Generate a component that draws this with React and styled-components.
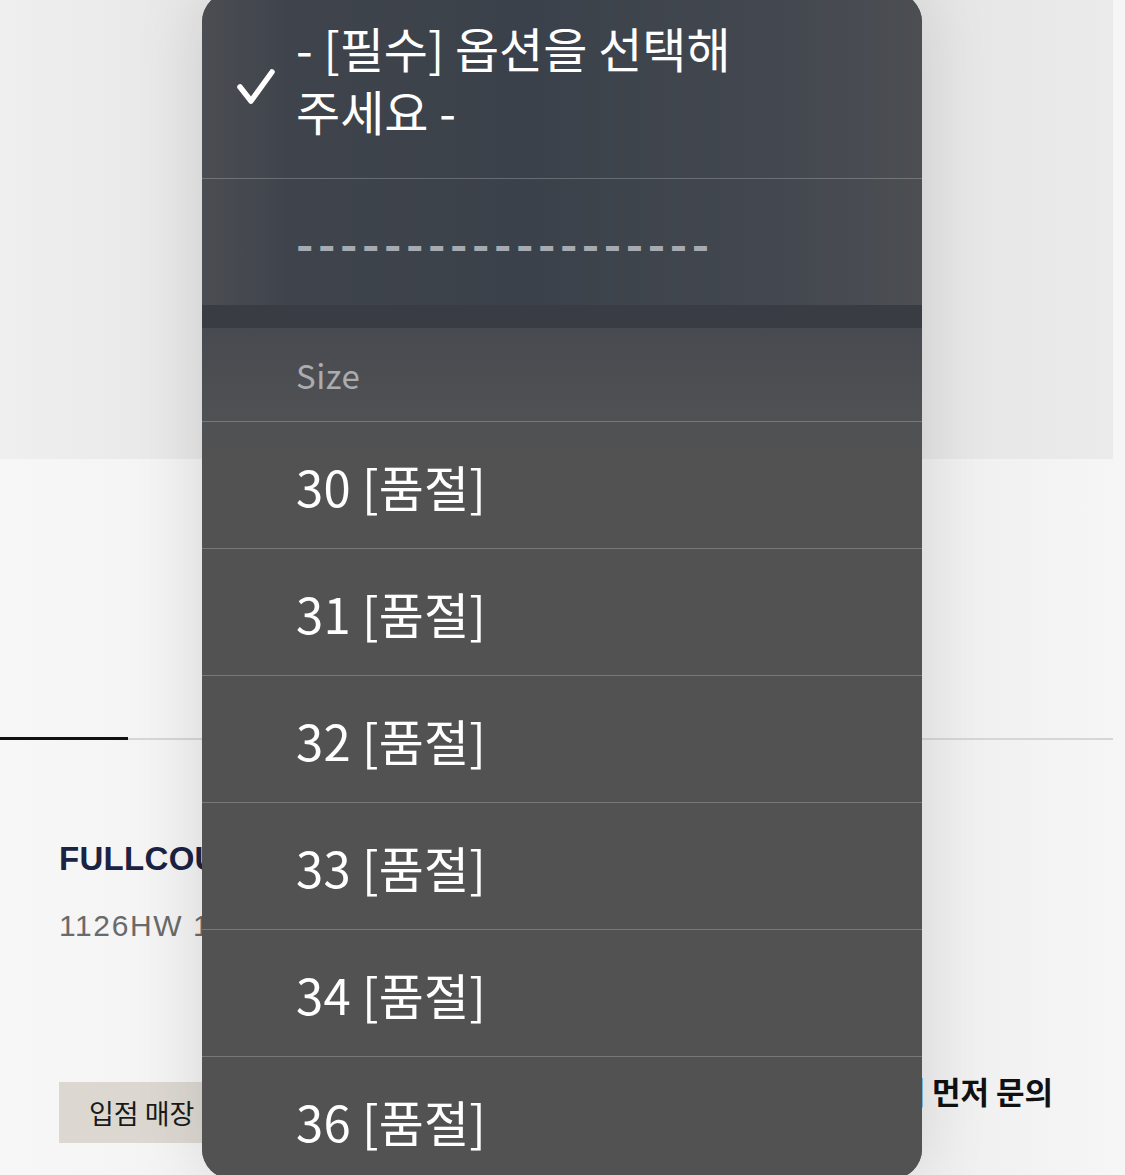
import React from 'react';
import styled, { createGlobalStyle } from 'styled-components';

const GlobalStyle = createGlobalStyle`
  html, body {
    margin: 0;
    padding: 0;
    background: #f3f3f3;
  }
  body {
    font-family: "Noto Sans", "Noto Sans CJK KR", sans-serif;
  }
`;

const Page = styled.div`
  position: relative;
  width: 1125px;
  height: 1175px;
  overflow: hidden;
  background: linear-gradient(to right, #f7f7f7 0%, #efefef 40%, #f0f0f0 85%, #f6f6f6 100%);
`;

const Hero = styled.div`
  width: 1113px;
  height: 459px;
  background: linear-gradient(to right, #efefef 0%, #e1e1e1 35%, #e3e3e3 75%, #ebebeb 100%);
`;

const Tabs = styled.div`
  display: flex;
  align-items: center;
  width: 1113px;
  margin-top: 278px;
  height: 3px;
`;

const TabLine = styled.div`
  height: ${(p) => (p.$active ? '3px' : '2px')};
  width: ${(p) => (p.$active ? '128px' : 'auto')};
  flex: ${(p) => (p.$active ? 'none' : '1')};
  background: ${(p) => (p.$active ? '#111' : '#d6d6d6')};
`;

const Info = styled.div`
  padding: 99px 72px 0 59px;
  display: flex;
  flex-direction: column;
`;

const ProductName = styled.div`
  font-family: "Liberation Sans", "Noto Sans CJK KR", sans-serif;
  font-weight: 700;
  font-size: 33px;
  line-height: 40px;
  color: #1b2242;
  letter-spacing: 0.3px;
`;

const ProductCode = styled.div`
  margin-top: 29px;
  font-family: "Liberation Sans", "Noto Sans CJK KR", sans-serif;
  font-size: 30px;
  line-height: 36px;
  color: #6a6a6a;
  letter-spacing: 1.6px;
`;

const ActionRow = styled.div`
  margin-top: 138px;
  display: flex;
  align-items: center;
  justify-content: space-between;
`;

const StoreButton = styled.div`
  display: flex;
  align-items: center;
  height: 61px;
  padding: 0 30px;
  background: #dcd8d1;
  font-family: "Noto Sans CJK KR", sans-serif;
  font-size: 27px;
  color: #1a1a1a;
`;

const Notice = styled.div`
  font-family: "Noto Sans CJK KR", sans-serif;
  font-weight: 700;
  font-size: 31px;
  color: #111;
  margin-top: -44px;
`;

const Menu = styled.div`
  position: absolute;
  left: 202px;
  top: -8px;
  width: 720px;
  height: 1187px;
  border-radius: 30px;
  overflow: hidden;
  background: #525252;
  box-shadow: 0 0 70px rgba(0, 0, 0, 0.12);
`;

const TopBlock = styled.div`
  background: linear-gradient(to right, #4b4d52 0%, #3f444c 12%, #3b414a 45%, #434850 80%, #4c4e52 100%);
`;

const LowerBlock = styled.div`
  background: linear-gradient(to bottom, #474a50 0px, #505153 90px, #525252 160px);
`;

const Row = styled.div`
  position: relative;
  display: flex;
  align-items: ${(p) => (p.$top ? 'flex-start' : 'center')};
  height: ${(p) => p.$h}px;
  padding-left: 94px;
  padding-top: ${(p) => (p.$top ? '20px' : '0')};
  box-sizing: border-box;
  border-bottom: ${(p) => (p.$noLine ? 'none' : '1px solid rgba(255,255,255,0.22)')};
`;

const Check = styled.svg`
  position: absolute;
  left: 34px;
  top: 76px;
`;

const Label = styled.div`
  font-family: "Noto Sans CJK KR", sans-serif;
  font-size: ${(p) => p.$size || 47}px;
  line-height: ${(p) => p.$lh || 63}px;
  font-weight: ${(p) => p.$weight || 400};
  color: ${(p) => p.$color || '#ffffff'};
  letter-spacing: ${(p) => p.$ls || 0}px;
  margin-top: ${(p) => p.$mt || 0}px;
  white-space: nowrap;
`;

const GroupGap = styled.div`
  height: 23px;
  background: #393c42;
`;

const sizes = ['30', '31', '32', '33', '34', '36'];

export default function App() {
  return (
    <Page>
      <GlobalStyle />
      <Hero />
      <Tabs>
        <TabLine $active />
        <TabLine />
      </Tabs>
      <Info>
        <ProductName>FULLCOUNT</ProductName>
        <ProductCode>1126HW 1</ProductCode>
        <ActionRow>
          <StoreButton>입점 매장</StoreButton>
          <Notice>매장에 먼저 문의</Notice>
        </ActionRow>
      </Info>

      <Menu>
        <TopBlock>
          <Row $h={187} $top>
            <Check width="40" height="38" viewBox="0 0 40 38">
              <polyline
                points="4,19 15,33 36,4"
                fill="none"
                stroke="#ffffff"
                strokeWidth="5.5"
                strokeLinecap="round"
                strokeLinejoin="round"
              />
            </Check>
            <Label $size={48} $mt={4}>
              - [필수] 옵션을 선택해
              <br />
              주세요 -
            </Label>
          </Row>
          <Row $h={126} $noLine>
            <Label $color="#a7abb1" $ls={4.6} $weight={700} $mt={-2}>-------------------</Label>
          </Row>
        </TopBlock>
        <GroupGap />
        <LowerBlock>
          <Row $h={94}>
            <Label $size={33} $lh={40} $color="#a9acb1" $ls={0.5}>Size</Label>
          </Row>
          {sizes.map((s) => (
            <Row key={s} $h={127}>
              <Label $size={49} $ls={0.2}>{s} [품절]</Label>
            </Row>
          ))}
        </LowerBlock>
      </Menu>
    </Page>
  );
}
